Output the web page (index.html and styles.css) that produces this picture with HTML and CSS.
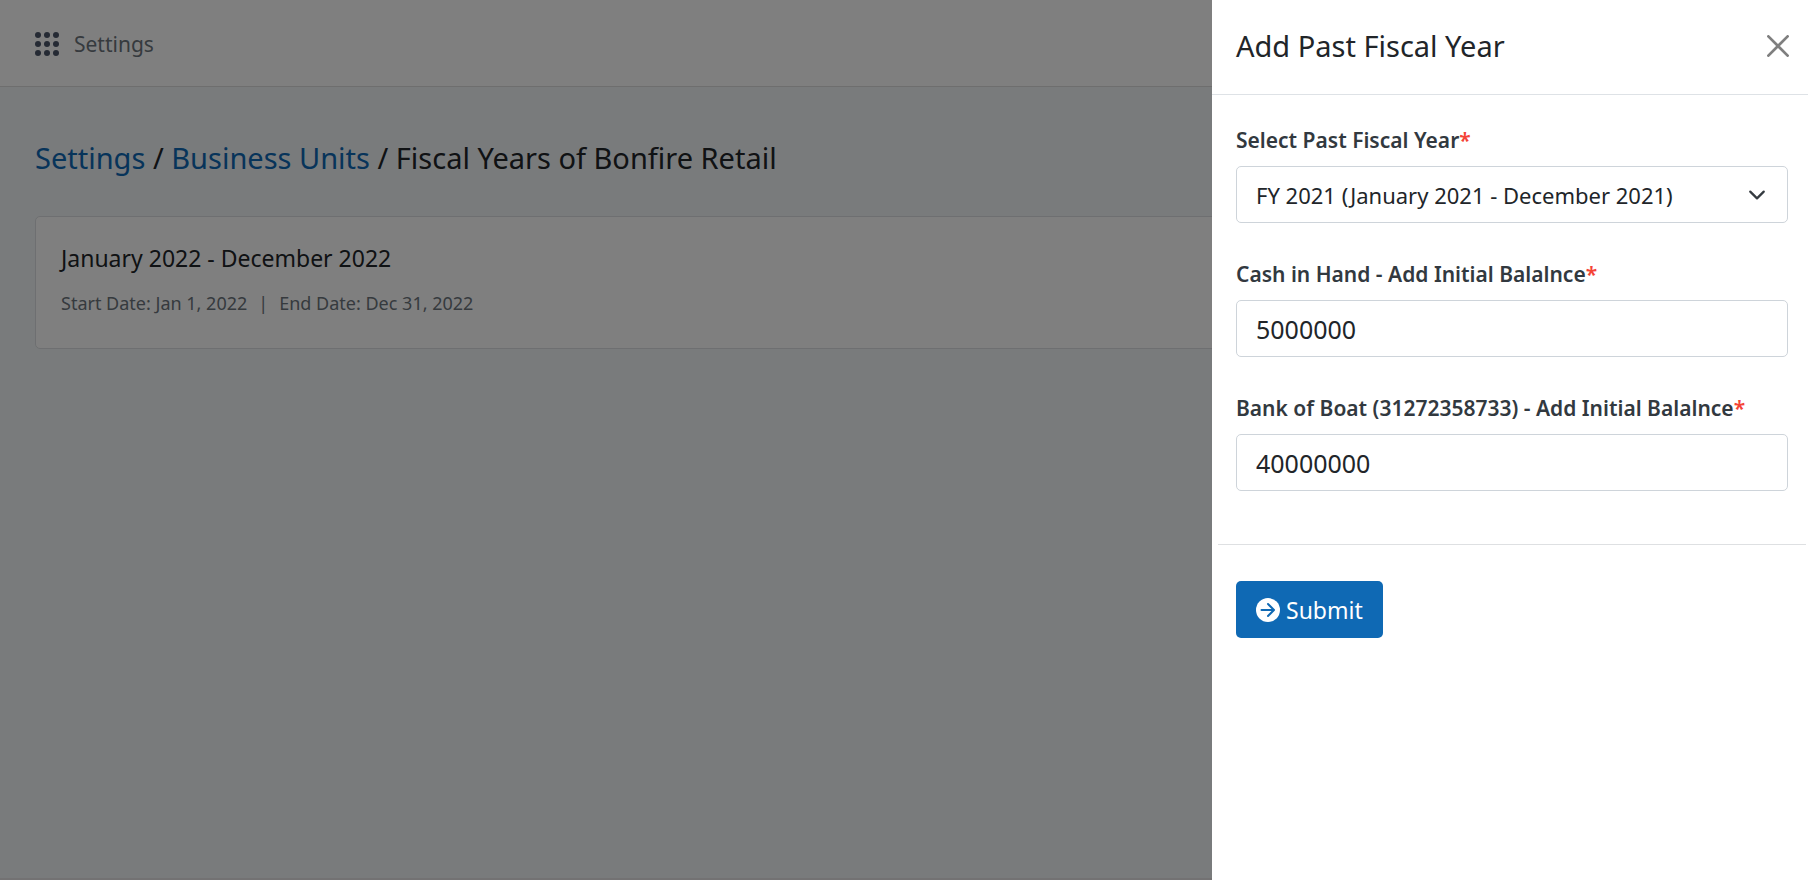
FILE: index.html
```html
<!DOCTYPE html>
<html lang="en">
<head>
<meta charset="utf-8">
<meta name="viewport" content="width=device-width, initial-scale=1">
<title>Fiscal Years of Bonfire Retail</title>
<link rel="stylesheet" href="styles.css">
</head>
<body>
<div class="page">
  <header class="topbar">
    <svg class="apps-icon" viewBox="0 0 24 24" aria-hidden="true">
      <circle cx="3" cy="3" r="3"/><circle cx="12" cy="3" r="3"/><circle cx="21" cy="3" r="3"/>
      <circle cx="3" cy="12" r="3"/><circle cx="12" cy="12" r="3"/><circle cx="21" cy="12" r="3"/>
      <circle cx="3" cy="21" r="3"/><circle cx="12" cy="21" r="3"/><circle cx="21" cy="21" r="3"/>
    </svg>
    <span class="topbar-title">Settings</span>
  </header>
  <main class="content">
    <h1 class="breadcrumb"><a href="#">Settings</a> / <a href="#">Business Units</a> / Fiscal Years of Bonfire Retail</h1>
    <section class="card">
      <h2 class="card-title">January 2022 - December 2022</h2>
      <p class="card-dates">
        <span>Start Date: Jan 1, 2022</span>
        <span class="separator">|</span>
        <span>End Date: Dec 31, 2022</span>
      </p>
    </section>
  </main>
</div>

<div class="backdrop"></div>

<aside class="drawer" role="dialog" aria-labelledby="drawer-title">
  <header class="drawer-header">
    <h2 class="drawer-title" id="drawer-title">Add Past Fiscal Year</h2>
    <button class="close" type="button" aria-label="Close">
      <svg viewBox="0 0 16 16" aria-hidden="true"><path d="M1 1l14 14M15 1L1 15"/></svg>
    </button>
  </header>
  <form class="form">
    <div class="fields">
      <div class="field">
        <label for="year">Select Past Fiscal Year<span class="required">*</span></label>
        <div class="select-wrap">
          <select class="control select" id="year">
            <option>FY 2021 (January 2021 - December 2021)</option>
          </select>
          <svg class="chevron" viewBox="0 0 16 16" aria-hidden="true"><path d="m2 5 6 6 6-6"/></svg>
        </div>
      </div>
      <div class="field">
        <label for="cash">Cash in Hand - Add Initial Balalnce<span class="required">*</span></label>
        <input class="control" id="cash" type="text" value="5000000">
      </div>
      <div class="field">
        <label for="bank">Bank of Boat (31272358733) - Add Initial Balalnce<span class="required">*</span></label>
        <input class="control" id="bank" type="text" value="40000000">
      </div>
    </div>
    <hr class="divider">
    <div class="actions">
      <button class="submit" type="button">
        <svg viewBox="0 0 24 24" aria-hidden="true">
          <circle cx="12" cy="12" r="12"/>
          <path d="M5.500 12H17.500M12 6L18 12L12 18"/>
        </svg>
        Submit
      </button>
    </div>
  </form>
</aside>
</body>
</html>
```
FILE: styles.css
```css
* {
  box-sizing: border-box;
}

body {
  margin: 0;
  background: #f3f6f9;
  color: #212529;
  font-family: "Noto Sans", "Open Sans", sans-serif;
  font-size: 24px;
}

h1,
h2,
p {
  margin: 0;
}

.page {
  min-height: 100vh;
  border-bottom: 2px solid #e6e4e6;
}

.topbar {
  display: flex;
  align-items: center;
  gap: 15px;
  height: 87px;
  padding: 2px 35px 0;
  border-bottom: 1px solid #dcdcdc;
  background: #fff;
}

.apps-icon {
  width: 24px;
  height: 24px;
  fill: #4a5568;
}

.topbar-title {
  color: #6c757d;
  font-size: 21px;
  font-weight: 400;
  line-height: 32px;
}

.content {
  padding: 51px 35px;
}

.breadcrumb {
  margin-bottom: 38px;
  font-size: 29px;
  font-weight: 400;
  line-height: 40px;
}

.breadcrumb a {
  color: #0f69b4;
  text-decoration: none;
}

.card {
  padding: 24px 25px;
  border: 1px solid #dcdfe2;
  border-radius: 5px;
  background: #fff;
}

.card-title {
  margin-bottom: 14px;
  font-size: 23px;
  font-weight: 400;
  line-height: 34px;
}

.card-dates {
  display: flex;
  gap: 11px;
  padding-bottom: 7px;
  color: #6c757d;
  font-size: 18px;
  font-weight: 400;
  line-height: 28px;
}

.backdrop {
  position: fixed;
  inset: 0;
  background: rgba(0, 0, 0, 0.5);
}

.drawer {
  position: fixed;
  inset: 0 0 0 auto;
  width: 596px;
  max-width: 100%;
  background: #fff;
}

.drawer-header {
  display: flex;
  align-items: center;
  justify-content: space-between;
  height: 95px;
  padding: 0 19px 2px 24px;
  border-bottom: 1px solid #dee2e6;
}

.drawer-title {
  font-size: 29px;
  font-weight: 400;
  line-height: 40px;
}

.close {
  display: flex;
  padding: 0;
  border: 0;
  background: none;
}

.close svg {
  width: 22px;
  height: 22px;
  fill: none;
  stroke: #7f7f7f;
  stroke-width: 2;
  stroke-linecap: round;
}

.form {
  padding: 32px 0;
}

.fields {
  display: flex;
  flex-direction: column;
  gap: 38px;
  padding: 0 20px 0 24px;
}

.field {
  display: flex;
  flex-direction: column;
  gap: 12px;
}

label {
  color: #32393f;
  font-size: 21px;
  font-weight: 600;
  line-height: 27px;
}

.required {
  color: #f44336;
}

.control {
  width: 100%;
  height: 57px;
  padding: 0 19px;
  border: 1px solid #ced4da;
  border-radius: 5px;
  background: #fff;
  color: #212529;
  font-family: inherit;
  font-size: 25px;
  font-weight: 400;
}

.select-wrap {
  position: relative;
}

.select {
  display: block;
  appearance: none;
  font-size: 22px;
}

.chevron {
  position: absolute;
  top: 20px;
  right: 22px;
  width: 18px;
  height: 18px;
  fill: none;
  stroke: #343a40;
  stroke-width: 2;
  stroke-linecap: round;
  stroke-linejoin: round;
  pointer-events: none;
}

.divider {
  height: 1px;
  margin: 53px 2px 36px 6px;
  border: 0;
  background: #dee0e2;
}

.actions {
  padding: 0 24px;
}

.submit {
  display: flex;
  align-items: center;
  gap: 6px;
  height: 57px;
  padding: 0 20px;
  border: 0;
  border-radius: 5px;
  background: #0f69b4;
  color: #fff;
  font-family: inherit;
  font-size: 23px;
  font-weight: 400;
}

.submit svg {
  width: 24px;
  height: 24px;
  fill: #fff;
}

.submit path {
  fill: none;
  stroke: #0f69b4;
  stroke-width: 2;
  stroke-linecap: round;
  stroke-linejoin: round;
}
```
